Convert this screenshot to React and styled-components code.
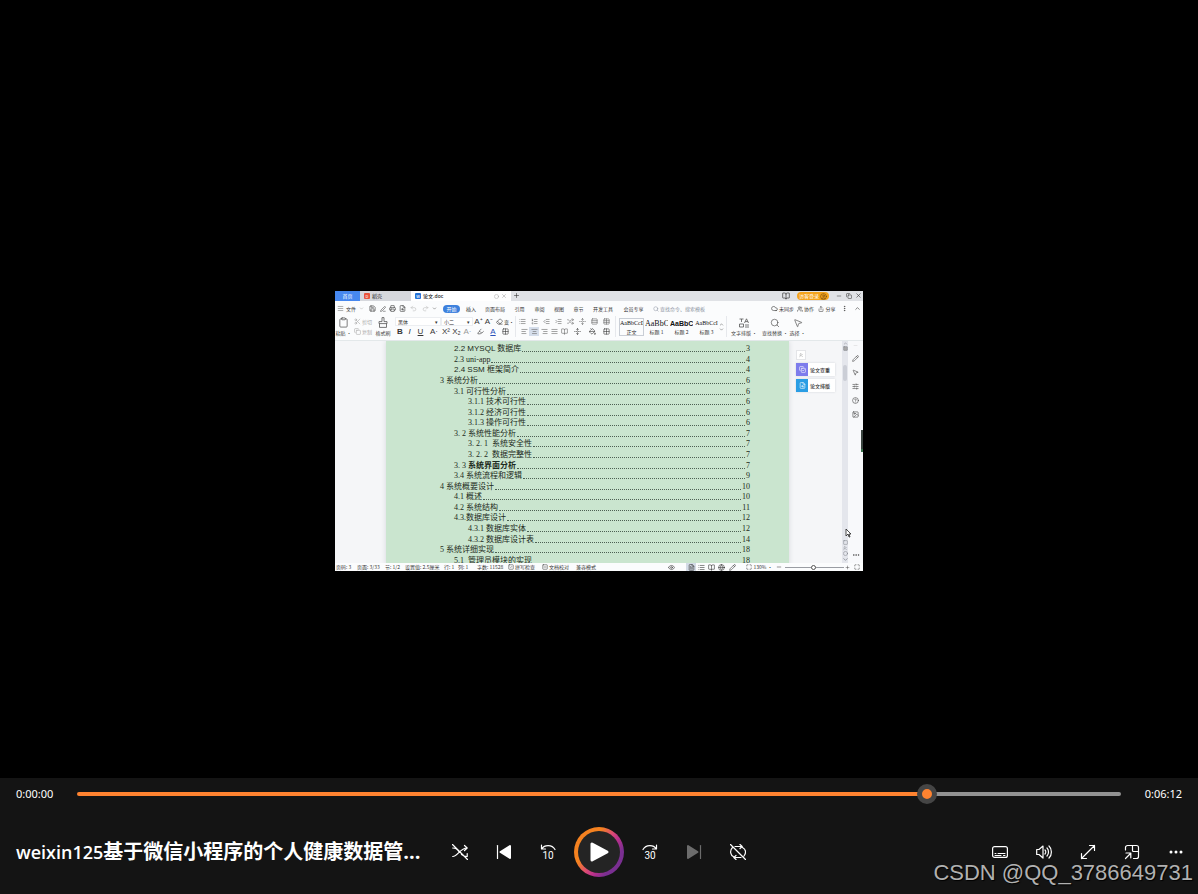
import React, { useState } from "react";
import styled, { createGlobalStyle } from "styled-components";
import {
  AlignCenter, AlignJustify, AlignLeft, AlignRight, BookOpen, ChevronDown, ChevronUp,
  CircleHelp, CircleUser, Clipboard, Cloud, Copy, Ellipsis, EllipsisVertical, Eraser, Eye, FileSearch, FileText, Globe,
  Grid2x2, Highlighter, Image, IndentDecrease, IndentIncrease, List, ListOrdered, Maximize, Menu, Minus, MousePointer2,
  PaintBucket, Pencil, Plus, Printer, Redo2, Save, Scissors, Search, Share, SlidersHorizontal, SquareCheck,
  SquareMinus, Table, Undo2, UnfoldVertical, Users, X, Circle, Square, ChevronsUp, CopyCheck, PenLine, Rows3, Shuffle,
} from "lucide-react";

const Global = createGlobalStyle`
  *, *::before, *::after { box-sizing: border-box; }
  body { margin: 0; background: #000; }
  button, input { font: inherit; color: inherit; }
  button { border: 0; padding: 0; background: none; }
  h1, p { margin: 0; }
`;

const Player = styled.div`
  position: relative;
  display: flex;
  flex-direction: column;
  min-height: 100vh;
  color: #fff;
  background: #000;
  font-family: "Noto Sans", "Noto Sans CJK SC", sans-serif;
`;
const Stage = styled.main`
  flex: 1;
  display: flex;
  align-items: center;
  justify-content: center;
  padding-top: 84px;
`;

/* ---------- word processor shown in the video ---------- */
const Frame = styled.section`
  position: relative;
  width: 528px;
  overflow: hidden;
  color: #333;
  background: #fbfcfd;
  font: 5px/8px "Noto Sans CJK SC", sans-serif;
  white-space: nowrap;
`;
const Tabs = styled.div`
  display: flex;
  height: 10px;
  background: #e0e2e6;
`;
const Tab = styled.div`
  display: flex;
  align-items: center;
  gap: 2px;
  width: ${(p) => p.$w}px;
  padding: 0 ${(p) => (p.$center ? 0 : 4)}px;
  justify-content: ${(p) => (p.$center ? "center" : "flex-start")};
  color: ${(p) => p.$color || "#222"};
  background: ${(p) => p.$bg || "transparent"};
  font-weight: ${(p) => (p.$strong ? 500 : 400)};
`;
const TabMark = styled.span`
  display: grid;
  place-items: center;
  width: 6px;
  height: 6px;
  border-radius: 1px;
  color: #fff;
  background: ${(p) => p.$bg};
  font-size: 4px;
  line-height: 6px;
`;
const Spacer = styled.span`
  flex: 1;
`;
const Account = styled.button`
  display: flex;
  align-items: center;
  justify-content: center;
  gap: 1px;
  width: 32px;
  height: 8px;
  margin: 1px 5px 0 6px;
  border-radius: 4px;
  color: #fff;
  background: #f5a31a;
`;
const Strip = styled.div`
  display: flex;
  align-items: center;
  height: ${(p) => p.$h}px;
`;
const Cell = styled.span`
  flex: none;
  display: flex;
  align-items: center;
  justify-content: ${(p) => (p.$left ? "flex-start" : "center")};
  gap: 1px;
  width: ${(p) => p.$w}px;
  height: 9px;
  color: ${(p) => p.$color || "inherit"};
  background: ${(p) => p.$bg || "transparent"};
  font-family: ${(p) => (p.$latin ? '"Liberation Sans", sans-serif' : "inherit")};
  font-size: ${(p) => (p.$latin ? 8 : 5)}px;
  font-weight: ${(p) => (p.$bold ? 700 : 400)};
  font-style: ${(p) => (p.$italic ? "italic" : "normal")};
  text-decoration: ${(p) => (p.$under ? "underline" : "none")};
`;
const Pill = styled.button`
  width: 17px;
  height: 8px;
  margin: 0 1px 0 6px;
  border-radius: 4px;
  color: #fff;
  background: #3c80dd;
  line-height: 8px;
`;
const Ribbon = styled.div`
  display: flex;
  height: 25px;
  padding-bottom: 3px;
  border-bottom: 1px solid #e3e8ea;
`;
const Group = styled.div`
  display: flex;
  flex-direction: column;
  justify-content: center;
  width: ${(p) => p.$w}px;
  border-right: 1px solid ${(p) => (p.$rule ? "#e6e8ec" : "transparent")};
`;
const Line = styled.div`
  display: flex;
  height: 10px;
  align-items: center;
`;
const Big = styled.button`
  display: flex;
  flex-direction: column;
  align-items: center;
  justify-content: center;
  gap: 1px;
  width: ${(p) => p.$w}px;
  line-height: 7px;
  color: #444;
`;
const Picker = styled.span`
  display: flex;
  align-items: center;
  justify-content: space-between;
  width: ${(p) => p.$w}px;
  height: 9px;
  padding: 0 2px;
  border: 1px solid #eceef1;
  background: #fff;
`;
const Sample = styled.button`
  display: flex;
  flex-direction: column;
  align-items: safe center;
  width: 25px;
  height: 18px;
  margin-top: 2px;
  overflow: hidden;
  border: 1px solid ${(p) => (p.$on ? "#c9ced6" : "transparent")};
  line-height: 7px;
`;
const Preview = styled.span`
  font-family: ${(p) => (p.$sans ? '"Liberation Sans", sans-serif' : '"Liberation Serif", serif')};
  font-size: ${(p) => p.$size}px;
  font-weight: ${(p) => (p.$sans ? 700 : 400)};
  line-height: 9px;
  color: #111;
`;
const Work = styled.div`
  display: flex;
  height: 222px;
  overflow: hidden;
  background: #f5f6f8;
`;
const Page = styled.article`
  display: grid;
  grid-template-rows: repeat(21, 1fr);
  width: 403px;
  height: 225px;
  margin-left: 51px;
  padding: 3px 39px 0 53px;
  background: #cae5cf;
  box-shadow: 0 0 5px #d5d8dc;
  color: #1c2a20;
  font: 8px/10px "Liberation Serif", "Noto Sans CJK SC", serif;
`;
const Entry = styled.p`
  display: flex;
  align-items: center;
  padding-left: ${(p) => [1, 15, 29][p.$level]}px;
  white-space: pre;
  font-family: ${(p) => (p.$sans ? '"Liberation Sans", "Noto Sans CJK SC", sans-serif' : "inherit")};
`;
const Leader = styled.span`
  flex: 1;
  height: 6px;
  margin: 0 1px;
  border-bottom: 1px dotted #4d6053;
`;
const PageNo = styled.span`
  font-family: "Liberation Serif", serif;
`;
const Tools = styled.aside`
  display: flex;
  flex-direction: column;
  align-items: flex-start;
  gap: 3px;
  flex: 1;
  padding: 9px 0 0 7px;
`;
const Fold = styled.button`
  display: grid;
  place-items: center;
  width: 10px;
  height: 10px;
  border: 1px solid #e4e5e8;
  background: #fff;
  color: #777;
`;
const Card = styled.button`
  display: flex;
  width: 39px;
  height: 13px;
  background: #fff;
  box-shadow: 0 0 2px #cfd2d8;
  line-height: 13px;
  font-weight: 500;
`;
const CardIcon = styled.span`
  display: grid;
  place-items: center;
  width: 12px;
  height: 13px;
  margin-right: 2px;
  color: #fff;
  background: ${(p) => p.$bg};
`;
const Scroll = styled.div`
  display: flex;
  flex-direction: column;
  align-items: center;
  width: 6px;
  background: #e4e6ec;
  color: #6b7078;
`;
const Thumb = styled.span`
  width: 4px;
  height: 16px;
  margin-top: 14px;
  border-radius: 2px;
  background: #cbced6;
`;
const Rail = styled.div`
  display: flex;
  flex-direction: column;
  align-items: center;
  gap: 7px;
  width: 15px;
  padding: 2px 0 4px;
  background: #f8f9fb;
  color: #444;
`;
const Edge = styled.span`
  position: absolute;
  right: 0;
  top: 139px;
  width: 2px;
  height: 22px;
  background: #3a4440;
  border-bottom: 3px solid #39734d;
`;
const Pointer = styled.svg`
  position: absolute;
  left: 510px;
  top: 237px;
`;
const Zoom = styled.input`
  appearance: none;
  width: 59px;
  height: 5px;
  margin: 0;
  background: linear-gradient(#9a9da3, #9a9da3) center / 100% 1px no-repeat;
  &::-webkit-slider-thumb {
    appearance: none;
    width: 5px;
    height: 5px;
    border: 1px solid #555;
    border-radius: 50%;
    background: #fff;
  }
`;

/* ---------- player controls ---------- */
const Controls = styled.footer`
  background: #141414;
`;
const Timeline = styled.div`
  display: flex;
  align-items: center;
  height: 32px;
  padding: 0 16px;
`;
const Time = styled.span`
  width: 61px;
  font-size: 11px;
  line-height: 16px;
  text-align: ${(p) => (p.$end ? "right" : "left")};
`;
const Seek = styled.input.attrs((p) => ({ style: { "--played": `${p.value}%` } }))`
  appearance: none;
  flex: 1;
  min-width: 0;
  height: 20px;
  margin: 0;
  background: transparent;
  &::-webkit-slider-runnable-track {
    height: 4px;
    border-radius: 2px;
    background: linear-gradient(90deg, #ff8330 var(--played), #929292 var(--played));
  }
  &::-webkit-slider-thumb {
    appearance: none;
    width: 20px;
    height: 20px;
    margin-top: -8px;
    border: 5px solid #454545;
    border-radius: 50%;
    background: #ff8330;
  }
`;
const Deck = styled.div`
  display: grid;
  grid-template-columns: 1fr auto 1fr;
  align-items: center;
  height: 84px;
`;
const Title = styled.h1`
  padding-left: 16px;
  font: 700 20px/28px "Open Sans", "Noto Sans CJK SC", sans-serif;
  white-space: nowrap;
`;
const Name = styled.span`
  font-size: 18px;
  font-weight: 600;
`;
const Buttons = styled.div`
  display: flex;
  align-items: center;
  justify-content: ${(p) => (p.$end ? "flex-end" : "center")};
`;
const Action = styled.button`
  display: grid;
  place-items: center;
  width: 44px;
  height: 40px;
  color: ${(p) => (p.disabled ? "#6c6c6c" : "#fff")};
`;
const Play = styled.button`
  display: grid;
  place-items: center;
  width: 50px;
  height: 50px;
  margin: 0 4px;
  border: 4px solid transparent;
  border-radius: 50%;
  background:
    linear-gradient(#242424, #242424) padding-box,
    linear-gradient(125deg, #f58220 34%, #d8467a 52%, #b8308c 62%, #7a2f91 76%) border-box;
`;
const Watermark = styled.span`
  position: absolute;
  right: 5px;
  bottom: 7px;
  color: #b1b1b1;
  font: 22px/28px "Liberation Sans", sans-serif;
  text-shadow: 1px 1px 1px #000;
  pointer-events: none;
`;

const Glyph = ({ children, size = 16 }) => (
  <svg width={size} height={size} viewBox={`0 0 ${size} ${size}`} fill="none" stroke="currentColor" strokeWidth="1.2" strokeLinecap="round" strokeLinejoin="round" aria-hidden="true">
    {children}
  </svg>
);
const Seconds = ({ x, children }) => (
  <text x={x} y="15" textAnchor="middle" fontFamily="Roboto, sans-serif" fontSize="10" fill="currentColor" stroke="none">{children}</text>
);
const Mini = ({ as: Icon, size = 7, ...rest }) => <Icon size={size} strokeWidth={2} {...rest} />;
const Brush = () => (
  <svg width="10" height="11" viewBox="0 0 10 11" fill="none" stroke="#555" strokeWidth=".8"><path d="M4 .6h2v4h3v2H1v-2h3zM1.500 6.600v3.800h7V6.600" /></svg>
);
const Layout = () => (
  <svg width="11" height="10" viewBox="0 0 11 10" fill="none" stroke="#555" strokeWidth=".8"><path d="M.5 1h4M2.500 1v3M5.500 5 7.500.8 9.500 5M6.300 3.600h2.500M.5 6h4v3h-4zM6 7h4M6 9h4" /></svg>
);

const contents = [
  [1, "2.2 ", "MYSQL 数据库", 3, "sans"], [1, "2.3 ", "uni-app", 4], [1, "2.4 ", "SSM 框架简介", 4, "sans"],
  [0, "3 ", "系统分析", 6], [1, "3.1 ", "可行性分析", 6], [2, "3.1.1 ", "技术可行性", 6],
  [2, "3.1.2 ", "经济可行性", 6], [2, "3.1.3 ", "操作可行性", 6], [1, "3. 2 ", "系统性能分析", 7],
  [2, "3. 2. 1  ", "系统安全性", 7], [2, "3. 2. 2  ", "数据完整性", 7], [1, "3. 3 ", "系统界面分析", 7, "bold"],
  [1, "3.4 ", "系统流程和逻辑", 9], [0, "4 ", "系统概要设计", 10], [1, "4.1 ", "概述", 10],
  [1, "4.2 ", "系统结构", 11], [1, "4.3.", "数据库设计", 12], [2, "4.3.1 ", "数据库实体", 12],
  [2, "4.3.2 ", "数据库设计表", 14], [0, "5 ", "系统详细实现", 18], [1, "5.1  ", "管理员模块的实现", 18],
];
const menus = [["插入", 20], ["页面布局", 28], ["引用", 21], ["审阅", 19], ["视图", 20], ["章节", 19], ["开发工具", 30], ["会员专享", 31]];
const status = [["页码: 3", 21], ["页面: 3/33", 28], ["节: 1/2", 20], ["设置值: 2.5厘米", 39], ["行: 1", 14], ["列: 1", 19], ["字数: 11528", 31]];

function Document() {
  return (
    <Frame aria-label="论文.doc">
      <Tabs>
        <Tab $w={25} $center $color="#fff" $bg="#4788ef">首页</Tab>
        <Tab $w={51} $bg="#d6d8dd"><TabMark $bg="#e8523a">D</TabMark>稻壳</Tab>
        <Tab $w={100} $bg="#fff" $strong>
          <TabMark $bg="#2472d8">W</TabMark>论文.doc<Spacer />
          <Mini as={Circle} size={5} color="#999" /><Mini as={X} size={6} color="#999" />
        </Tab>
        <Cell $w={10}><Mini as={Plus} /></Cell>
        <Spacer />
        <Cell $w={10}><Mini as={BookOpen} size={8} /></Cell>
        <Account>访客登录<Mini as={CircleUser} size={7} color="#6b4510" /></Account>
        <Cell $w={9}><Mini as={Minus} size={6} /></Cell>
        <Cell $w={11}><Mini as={Copy} size={6} /></Cell>
        <Cell $w={9}><Mini as={X} size={7} /></Cell>
      </Tabs>
      <Strip $h={15}>
        <Cell $w={11}><Mini as={Menu} color="#777" /></Cell>
        <Cell $w={10}>文件</Cell>
        <Cell $w={11}><Mini as={ChevronDown} size={5} color="#999" /></Cell>
        <Cell $w={11}><Mini as={Save} /></Cell>
        <Cell $w={10}><Mini as={PenLine} size={6} /></Cell>
        <Cell $w={9}><Mini as={Printer} /></Cell>
        <Cell $w={10}><Mini as={FileSearch} /></Cell>
        <Cell $w={12}><Mini as={Undo2} color="#bbb" /></Cell>
        <Cell $w={12}><Mini as={Redo2} color="#bbb" /></Cell>
        <Cell $w={6}><Mini as={ChevronDown} size={5} /></Cell>
        <Pill>开始</Pill>
        {menus.map(([label, w]) => <Cell key={label} $w={w}>{label}</Cell>)}
        <Cell $w={60} $color="#8b93a1"><Mini as={Search} size={6} />查找命令、搜索模板</Cell>
        <Spacer />
        <Cell $w={25}><Mini as={Cloud} />未同步</Cell>
        <Cell $w={21}><Mini as={Users} size={6} />协作</Cell>
        <Cell $w={22}><Mini as={Share} size={6} />分享</Cell>
        <Cell $w={13}><Mini as={EllipsisVertical} /></Cell>
        <Cell $w={12}><Mini as={ChevronUp} /></Cell>
      </Strip>
      <Ribbon>
        <Big $w={17}><Mini as={Clipboard} size={11} strokeWidth={1.5} />粘贴 ·</Big>
        <Group $w={22}>
          <Line><Cell $w={22} $color="#aaa"><Mini as={Scissors} />剪切</Cell></Line>
          <Line><Cell $w={22} $color="#aaa"><Mini as={Copy} />复制</Cell></Line>
        </Group>
        <Big $w={18}><Brush />格式刷</Big>
        <Group $w={124} $rule>
          <Line>
            <Cell $w={3} /><Picker $w={46}>黑体<span>▾</span></Picker><Picker $w={32}>小二<span>▾</span></Picker>
            <Cell $w={11} $latin>A⁺</Cell><Cell $w={10} $latin>A⁻</Cell>
            <Cell $w={10}><Mini as={Eraser} /></Cell><Cell $w={10}>变·</Cell>
          </Line>
          <Line>
            <Cell $w={3} /><Cell $w={10} $latin $bold>B</Cell><Cell $w={9} $latin $italic>I</Cell>
            <Cell $w={13} $latin $under>U</Cell><Cell $w={14} $latin>A·</Cell><Cell $w={10} $latin>X²</Cell>
            <Cell $w={11} $latin>X₂</Cell><Cell $w={11} $latin $color="#999">A·</Cell>
            <Cell $w={14}><Mini as={Highlighter} /></Cell><Cell $w={12} $latin $under $color="#2850b8">A</Cell>
            <Cell $w={13}><Mini as={Grid2x2} /></Cell>
          </Line>
        </Group>
        <Group $w={100} $rule>
          <Line>
            {[List, ListOrdered, IndentDecrease, IndentIncrease, Shuffle, UnfoldVertical, Rows3, Table].map((I, i) => (
              <Cell key={i} $w={12}><Mini as={I} color="#666" /></Cell>
            ))}
          </Line>
          <Line>
            <Cell $w={3} />
            {[AlignLeft, AlignCenter, AlignRight, AlignJustify, BookOpen].map((I, i) => (
              <Cell key={i} $w={10} $bg={i === 1 ? "#d5deeb" : undefined}><Mini as={I} color="#666" /></Cell>
            ))}
            <Cell $w={16}><Mini as={UnfoldVertical} /></Cell>
            <Cell $w={15}><Mini as={PaintBucket} /></Cell><Cell $w={13}><Mini as={Grid2x2} /></Cell>
          </Line>
        </Group>
        <Cell $w={3} />
        <Sample $on><Preview $size={6}>AaBbCcDc</Preview>正文</Sample>
        <Sample><Preview $size={8}>AaBbC</Preview>标题 1</Sample>
        <Sample><Preview $size={7} $sans>AaBbC</Preview>标题 2</Sample>
        <Sample><Preview $size={6}>AaBbCcI</Preview>标题 3</Sample>
        <Group $w={8} $rule><Mini as={ChevronUp} size={5} /><Mini as={ChevronDown} size={5} /></Group>
        <Big $w={34}><Layout />文字排版 ·</Big>
        <Big $w={28}><Mini as={Search} size={10} strokeWidth={1.5} />查找替换 ·</Big>
        <Big $w={17}><Mini as={MousePointer2} size={10} strokeWidth={1.5} />选择 ·</Big>
      </Ribbon>
      <Work>
        <Page>
          {contents.map(([level, number, text, page, look]) => (
            <Entry key={text} $level={level} $sans={look === "sans"}>
              <span>{number}{look === "bold" ? <b>{text}</b> : text}</span><Leader /><PageNo>{page}</PageNo>
            </Entry>
          ))}
        </Page>
        <Tools>
          <Fold aria-label="收起"><Mini as={ChevronsUp} size={6} /></Fold>
          <Card><CardIcon $bg="#7d7cec"><Mini as={CopyCheck} /></CardIcon>论文查重</Card>
          <Card><CardIcon $bg="#2a9de4"><Mini as={FileSearch} /></CardIcon>论文排版</Card>
        </Tools>
        <Scroll>
          <Mini as={ChevronUp} size={5} /><Mini as={Square} size={5} fill="#aaa" /><Thumb /><Spacer />
          <Mini as={Square} size={5} /><Mini as={ChevronsUp} size={6} /><Mini as={Circle} size={5} /><Mini as={ChevronDown} size={7} />
        </Scroll>
        <Rail>
          <Mini as={Minus} size={5} color="#ccc" />
          {[Pencil, MousePointer2, SlidersHorizontal, CircleHelp, Image].map((I, i) => <Mini key={i} as={I} />)}
          <Spacer /><Mini as={Ellipsis} size={8} />
        </Rail>
      </Work>
      <Strip $h={8}>
        <Cell $w={1} />
        {status.map(([label, w]) => <Cell key={label} $w={w} $left>{label}</Cell>)}
        <Cell $w={34} $left><Mini as={SquareCheck} size={6} />拼写检查</Cell>
        <Cell $w={34} $left><Mini as={SquareMinus} size={6} />文档校对</Cell>
        <Cell $w={20} $left>兼容模式</Cell>
        <Spacer />
        <Cell $w={18} $left><Mini as={Eye} /></Cell>
        <Cell $w={10} $bg="#d3dbe6"><Mini as={FileText} /></Cell>
        <Cell $w={10}><Mini as={List} /></Cell><Cell $w={10}><Mini as={BookOpen} /></Cell>
        <Cell $w={10}><Mini as={Globe} /></Cell><Cell $w={12}><Mini as={Pencil} /></Cell>
        <Cell $w={7} /><Cell $w={8}><Mini as={Maximize} size={6} /></Cell>
        <Cell $w={20}>130% ·</Cell><Cell $w={12}><Mini as={Minus} size={6} /></Cell>
        <Zoom type="range" aria-label="缩放" defaultValue="49" />
        <Cell $w={6}><Mini as={Plus} size={5} /></Cell><Cell $w={13}><Mini as={Maximize} size={6} /></Cell>
      </Strip>
      <Edge />
      <Pointer width="7" height="10" viewBox="0 0 7 10"><path d="M1 1v7l2-2 1 3h1l-1-3h2z" fill="#fff" stroke="#222" strokeWidth=".8" /></Pointer>
    </Frame>
  );
}

export default function App() {
  const [position, setPosition] = useState(82);
  return (
    <Player>
      <Global />
      <Stage><Document /></Stage>
      <Controls>
        <Timeline>
          <Time>0:00:00</Time>
          <Seek type="range" min="0" max="100" step="any" aria-label="播放进度" value={position} onChange={(e) => setPosition(e.target.value)} />
          <Time $end>0:06:12</Time>
        </Timeline>
        <Deck>
          <Title><Name>weixin125</Name>基于微信小程序的个人健康数据管...</Title>
          <Buttons>
            <Action aria-label="随机播放"><Glyph>
              <path d="M.7 12.5C6 12.5 8 4 15 4M12.500 1.500 15.200 4l-2.700 2.500M.7 4c3 0 4.800 1.500 6.300 3.700M9.500 10.500c1.500 1.300 3 2 5.500 2M15.200 9.500v3M.5.5l15 15" />
            </Glyph></Action>
            <Action aria-label="上一个"><Glyph>
              <path d="M1.500 1.500v13" /><path d="M14 2v12L4.500 8z" fill="currentColor" strokeWidth="2" />
            </Glyph></Action>
            <Action aria-label="后退 10 秒"><Glyph>
              <path d="M1.500 1v4h4M1.700 4.800C4.500.6 12 .3 15 5.500" /><Seconds x="8">10</Seconds>
            </Glyph></Action>
            <Play aria-label="播放"><Glyph size={24}>
              <path d="M5 4v16L20 12z" fill="currentColor" strokeWidth="3" />
            </Glyph></Play>
            <Action aria-label="前进 30 秒"><Glyph>
              <path d="M14.500 1v4h-4M14.300 4.800C11.500.6 4 .3 1 5.500" /><Seconds x="8">30</Seconds>
            </Glyph></Action>
            <Action aria-label="下一个" disabled><Glyph>
              <path d="M14.500 1.500v13" /><path d="M2 2v12l9.500-6z" fill="currentColor" strokeWidth="2" />
            </Glyph></Action>
            <Action aria-label="重复播放"><Glyph>
              <path d="M5 2.500h7M10 .5l2.200 2L10 4.500M12.500 3.500c4 2 3.500 6 1.500 8.500M2.500 3.500c-3 3-2.300 8 1.500 9.500M11 13.500H4M6 11.500l-2.200 2 2.200 2M.5.5l15 15" />
            </Glyph></Action>
          </Buttons>
          <Buttons $end>
            <Action aria-label="字幕"><Glyph>
              <rect x=".6" y="2.600" width="14.800" height="10.800" rx="2" /><path d="M3 9.500h1M6 9.500h7M3 11.500h6M11.500 11.500H13" strokeWidth="1" />
            </Glyph></Action>
            <Action aria-label="音量"><Glyph>
              <path d="M.7 5.500v5H3l4 3.500V2L3 5.500zM9 6c1 1 1 3 0 4M11 4c2 2 2 6 0 8M13 2c3.200 3 3.200 9 0 12" />
            </Glyph></Action>
            <Action aria-label="全屏"><Glyph>
              <path d="M1.500 14.500l13-13M9.500 1.500h5v5M1.500 9.500v5h5" />
            </Glyph></Action>
            <Action aria-label="迷你播放器"><Glyph>
              <path d="M1.500 6v-2.500a2 2 0 0 1 2-2h9a2 2 0 0 1 2 2v9a2 2 0 0 1-2 2h-3M8.500 1.500v5a1 1 0 0 0 1 1h5M1.500 14.500l5-5M2 9h4.800v4.800" />
            </Glyph></Action>
            <Action aria-label="更多"><Glyph>
              <g fill="currentColor" stroke="none"><circle cx="3" cy="8" r="1.500" /><circle cx="8" cy="8" r="1.500" /><circle cx="13" cy="8" r="1.500" /></g>
            </Glyph></Action>
          </Buttons>
        </Deck>
      </Controls>
      <Watermark>CSDN @QQ_3786649731</Watermark>
    </Player>
  );
}
